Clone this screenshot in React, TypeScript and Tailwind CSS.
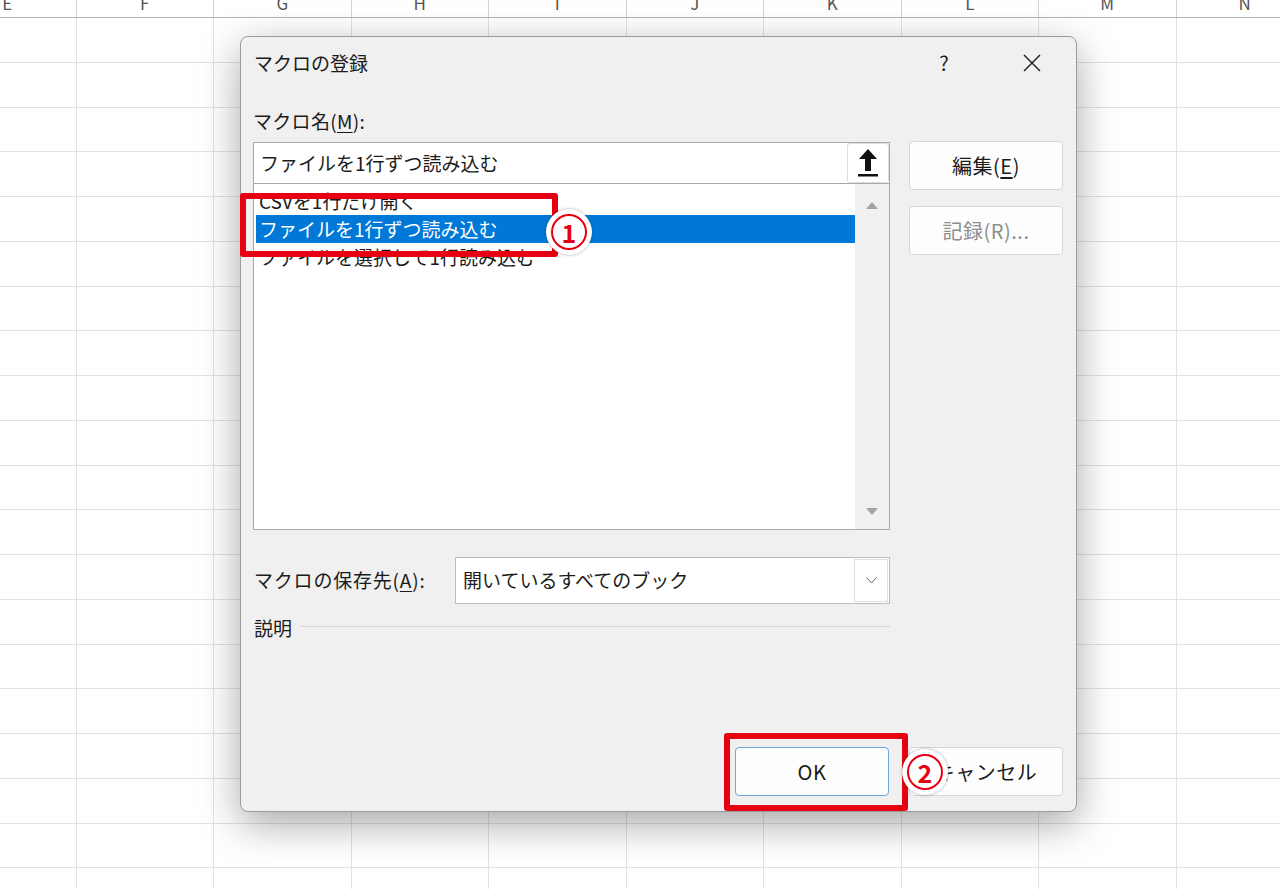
const cols = ['E', 'F', 'G', 'H', 'I', 'J', 'K', 'L', 'M', 'N', 'O'];
const rows = Array.from({ length: 20 }, (_, i) => i);

const macros = ['CSVを1行だけ開く', 'ファイルを1行ずつ読み込む', 'ファイルを選択して1行読み込む'];

const Sheet = () => (
  <div className="absolute inset-0">
    <div className="flex -ml-[61px] h-[18px] border-b border-[#b4b4b4] overflow-hidden bg-white">
      {cols.map((c) => (
        <div
          key={c}
          className="w-[137.5px] shrink-0 border-r border-[#d4d4d4] flex justify-center text-[17px] leading-none text-[#555] -mt-[6px]"
        >
          {c}
        </div>
      ))}
    </div>
    {rows.map((r) => (
      <div key={r} className="flex -ml-[61px]">
        {cols.map((c) => (
          <div key={c} className="w-[137.5px] h-[44.75px] shrink-0 border-r border-b border-[#e1e1e1]" />
        ))}
      </div>
    ))}
  </div>
);

const Btn = ({ children, disabled, focus }: { children: React.ReactNode; disabled?: boolean; focus?: boolean }) => (
  <div
    className={`w-[154px] h-[49px] rounded-[4px] bg-[#fdfdfd] border flex items-center justify-center text-[20px] tracking-[0.5px] ${
      focus ? 'border-[#6ea6dc]' : 'border-[#d6d6d6]'
    } ${disabled ? 'text-[#8d8d8d]' : 'text-[#1b1b1b]'}`}
  >
    {children}
  </div>
);

const Marker = ({ n }: { n: string }) => (
  <div className="w-[46px] h-[46px] rounded-full bg-white shadow-[0_0_3px_rgba(0,0,0,0.35)] flex items-center justify-center">
    <div className="w-[36px] h-[36px] rounded-full border-2 border-[#e60012] flex items-center justify-center text-[25px] leading-none font-semibold text-[#e60012]">
      {n}
    </div>
  </div>
);

export default function App() {
  return (
    <div className="relative w-[1280px] h-[889px] overflow-hidden bg-white font-['Noto_Sans_CJK_JP','Noto_Sans',sans-serif] text-[#1b1b1b]">
      <Sheet />

      {/* dialog */}
      <div className="absolute left-[240px] top-[36px] w-[837px] h-[776px] rounded-[8px] bg-[#f0f0f0] border border-[#9c9c9c] shadow-[0_12px_40px_rgba(0,0,0,0.35)] flex flex-col">
        <div className="h-[52px] flex items-center pl-[13px] pr-[21px] shrink-0">
          <span className="text-[19px]">マクロの登録</span>
          <span className="ml-auto w-[46px] text-center text-[20px]">?</span>
          <div className="ml-[42px] w-[46px] flex justify-center">
            <svg width="20" height="20" viewBox="0 0 20 20" stroke="#1b1b1b" strokeWidth="1.4">
              <path d="M2 2 L18 18 M18 2 L2 18" />
            </svg>
          </div>
        </div>

        <div className="flex-1 flex flex-col pl-[12px] pr-[13px] pb-[15px]">
          <div className="flex gap-[19px]">
            <div className="w-[637px]">
              <div className="h-[53px] pt-[11px] flex items-center text-[19px] tracking-[0.3px]">
                マクロ名(<span className="underline underline-offset-[3px]">M</span>):
              </div>
              <div className="h-[42px] border border-[#a9a9a9] bg-white flex items-center pl-[6px] text-[19px]">
                <span className="flex-1">ファイルを1行ずつ読み込む</span>
                <div className="w-[42px] h-[40px] rounded-[3px] border border-[#dcdcdc] bg-white flex items-center justify-center">
                  <svg width="22" height="30" viewBox="0 0 22 30">
                    <path d="M11 1 L20 11 L14 11 L14 23 L8 23 L8 11 L2 11 Z" fill="#111" />
                    <rect x="1" y="26" width="20" height="2.5" fill="#111" />
                  </svg>
                </div>
              </div>
              <div className="h-[346px] border border-t-0 border-[#a9a9a9] flex">
                <div className="flex-1 bg-white pt-[3px] pl-[2px] text-[19px]">
                  {macros.map((m, i) => (
                    <div
                      key={m}
                      className={`h-[28px] flex items-center pl-[3px] ${
                        i === 1 ? 'bg-[#0078d7] text-white' : ''
                      }`}
                    >
                      {m}
                    </div>
                  ))}
                </div>
                <div className="w-[34px] bg-[#f0f0f0] flex flex-col justify-between items-center pt-[18px] pb-[14px]">
                  <svg width="12" height="7" viewBox="0 0 12 7">
                    <path d="M6 0 L12 7 L0 7 Z" fill="#a3a3a3" />
                  </svg>
                  <svg width="12" height="7" viewBox="0 0 12 7">
                    <path d="M0 0 L12 0 L6 7 Z" fill="#a3a3a3" />
                  </svg>
                </div>
              </div>
            </div>
            <div className="w-[154px] pt-[52px] flex flex-col gap-[16px]">
              <Btn>
                編集(<span className="underline underline-offset-[3px]">E</span>)
              </Btn>
              <Btn disabled>記録(R)...</Btn>
            </div>
          </div>

          <div className="mt-[27px] h-[47px] flex items-center">
            <div className="w-[202px] text-[19px] pl-[1px] tracking-[0.8px]">
              マクロの保存先(<span className="underline underline-offset-[3px]">A</span>):
            </div>
            <div className="w-[435px] h-[47px] border border-[#bdbdbd] bg-white flex items-center pl-[7px] text-[19px]">
              <span className="flex-1">開いているすべてのブック</span>
              <div className="w-[34px] h-[43px] mr-[1px] border border-[#dedede] bg-white flex items-center justify-center">
                <svg width="11" height="7" viewBox="0 0 11 7" fill="none" stroke="#666" strokeWidth="1">
                  <path d="M0.5 0.5 L5.5 6 L10.5 0.5" />
                </svg>
              </div>
            </div>
          </div>

          <div className="mt-[11px] h-[26px] flex items-center w-[637px]">
            <span className="text-[19px] pl-[1px]">説明</span>
            <div className="flex-1 h-px bg-[#d6d6d6] ml-[8px] -mt-[3px]" />
          </div>

          <div className="mt-auto flex justify-end gap-[20px]">
            <Btn focus>OK</Btn>
            <Btn>キャンセル</Btn>
          </div>
        </div>
      </div>

      {/* annotations */}
      <div className="absolute left-[240px] top-[193px] w-[318px] h-[64px] border-[6px] border-[#e60012] rounded-[3px]" />
      <div className="absolute left-[546px] top-[209px]">
        <Marker n="1" />
      </div>
      <div className="absolute left-[724px] top-[733px] w-[184px] h-[78px] border-[6px] border-[#e60012] rounded-[3px]" />
      <div className="absolute left-[902px] top-[749px]">
        <Marker n="2" />
      </div>
    </div>
  );
}
